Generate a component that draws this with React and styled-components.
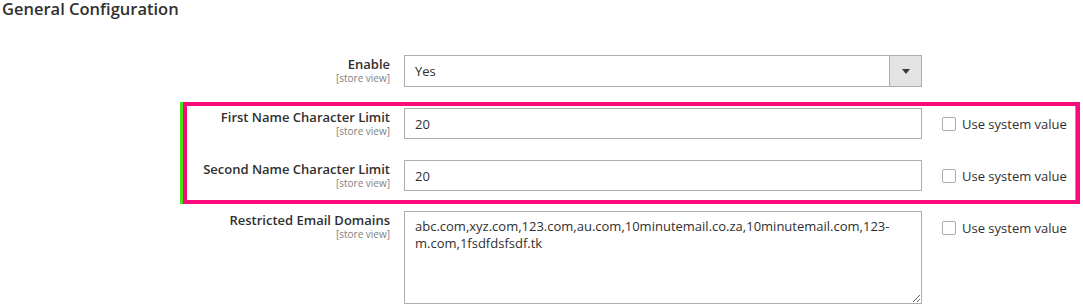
import React from 'react';
import styled, { createGlobalStyle } from 'styled-components';

const GlobalStyle = createGlobalStyle`
  body {
    margin: 0;
    background: #fff;
    font-family: 'Open Sans', 'Noto Sans', sans-serif;
    color: #303030;
  }
`;

const Page = styled.div`
  width: 1083px;
  height: 307px;
  overflow: hidden;
`;

const Title = styled.h2`
  margin: 0;
  padding-left: 2px;
  font-size: 16.5px;
  line-height: 17px;
  font-weight: 600;
  color: #303030;
`;

const Form = styled.div`
  margin: 38px 0 0 173px;
  width: 904px;
  display: flex;
  flex-direction: column;
`;

const Highlight = styled.div`
  margin: ${(props) => props.$top}px -3px 0 10px;
  border: 4px solid #fb0a7c;
  box-shadow: -3px 0 0 #44e31c, inset -1px 0 0 #44e31c;
  padding: 2px 0 9px;
  display: flex;
  flex-direction: column;
  gap: 21px;
`;

const Row = styled.div`
  display: grid;
  grid-template-columns: ${(props) => props.$labelWidth}px 518px 1fr;
  margin-top: ${(props) => props.$top || 0}px;
`;

const Label = styled.div`
  padding: 1px 14px 0 0;
  text-align: right;
`;

const LabelText = styled.div`
  font-size: 13px;
  line-height: 16px;
  font-weight: 600;
  color: #303030;
`;

const Scope = styled.div`
  font-size: 10px;
  line-height: 13px;
  color: #808080;
`;

const Select = styled.div`
  display: flex;
  height: 32px;
  box-sizing: border-box;
  border: 1px solid #adadad;
  background: #fff;
`;

const SelectValue = styled.div`
  flex: 1;
  padding: 0 10px;
  font-size: 13px;
  line-height: 30px;
`;

const SelectButton = styled.div`
  width: 31px;
  border-left: 1px solid #adadad;
  background: #e3e3e3;
  display: flex;
  align-items: center;
  justify-content: center;

  &::after {
    content: '';
    border-left: 4px solid transparent;
    border-right: 4px solid transparent;
    border-top: 5px solid #41362f;
  }
`;

const Input = styled.input`
  width: 518px;
  height: 31px;
  box-sizing: border-box;
  border: 1px solid #adadad;
  padding: 0 10px;
  font-family: inherit;
  font-size: 13px;
  color: #303030;
  outline: none;
`;

const TextArea = styled.textarea`
  width: 518px;
  height: 93px;
  box-sizing: border-box;
  border: 1px solid #adadad;
  padding: 6px 10px;
  font-family: inherit;
  font-size: 13px;
  line-height: 17px;
  color: #303030;
  outline: none;
  resize: both;
`;

const UseDefault = styled.label`
  display: flex;
  align-items: center;
  align-self: start;
  padding: ${(props) => props.$top}px 0 0 20px;
  font-size: 13px;
  line-height: 18px;
  color: #303030;
`;

const Box = styled.span`
  width: 14px;
  height: 14px;
  box-sizing: border-box;
  border: 1px solid #adadad;
  border-radius: 2px;
  background: #fff;
  margin-right: 6px;
`;

const Field = ({ label, children, useDefault, top, checkTop = 7, labelWidth = 231 }) => (
  <Row $top={top} $labelWidth={labelWidth}>
    <Label>
      <LabelText>{label}</LabelText>
      <Scope>[store view]</Scope>
    </Label>
    <div>{children}</div>
    {useDefault ? (
      <UseDefault $top={checkTop}>
        <Box />
        Use system value
      </UseDefault>
    ) : (
      <div />
    )}
  </Row>
);

const domains =
  'abc.com,xyz.com,123.com,au.com,10minutemail.co.za,10minutemail.com,123-m.com,1fsdfdsfsdf.tk';

export default function App() {
  return (
    <Page>
      <GlobalStyle />
      <Title>General Configuration</Title>
      <Form>
        <Field label="Enable">
          <Select>
            <SelectValue>Yes</SelectValue>
            <SelectButton />
          </Select>
        </Field>
        <Highlight $top={15}>
          <Field label="First Name Character Limit" useDefault labelWidth={217}>
            <Input defaultValue="20" />
          </Field>
          <Field label="Second Name Character Limit" useDefault labelWidth={217}>
            <Input defaultValue="20" />
          </Field>
        </Highlight>
        <Field label="Restricted Email Domains" useDefault top={7} checkTop={8}>
          <TextArea defaultValue={domains} />
        </Field>
      </Form>
    </Page>
  );
}
